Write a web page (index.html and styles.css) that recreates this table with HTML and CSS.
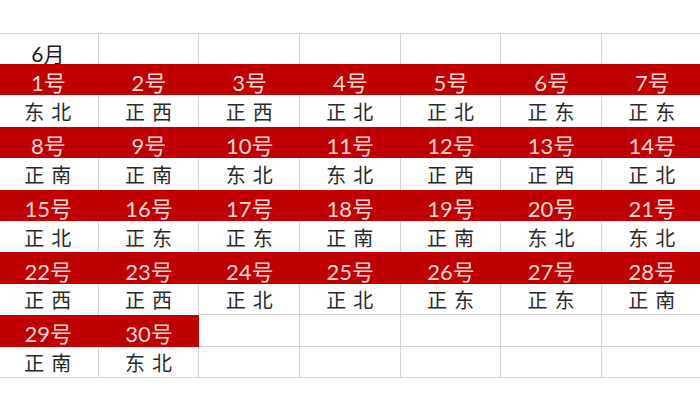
FILE: index.html
```html
<!DOCTYPE html>
<html lang="zh">
<head>
<meta charset="utf-8">
<link rel="stylesheet" href="styles.css">
</head>
<body>
<div class="sheet">
  <div class="c h">6月</div><div class="c"></div><div class="c"></div><div class="c"></div><div class="c"></div><div class="c"></div><div class="c"></div>

  <div class="r">1号</div><div class="r">2号</div><div class="r">3号</div><div class="r">4号</div><div class="r">5号</div><div class="r">6号</div><div class="r">7号</div>
  <div class="c w">东北</div><div class="c w">正西</div><div class="c w">正西</div><div class="c w">正北</div><div class="c w">正北</div><div class="c w">正东</div><div class="c w">正东</div>

  <div class="r">8号</div><div class="r">9号</div><div class="r">10号</div><div class="r">11号</div><div class="r">12号</div><div class="r">13号</div><div class="r">14号</div>
  <div class="c w">正南</div><div class="c w">正南</div><div class="c w">东北</div><div class="c w">东北</div><div class="c w">正西</div><div class="c w">正西</div><div class="c w">正北</div>

  <div class="r">15号</div><div class="r">16号</div><div class="r">17号</div><div class="r">18号</div><div class="r">19号</div><div class="r">20号</div><div class="r">21号</div>
  <div class="c w">正北</div><div class="c w">正东</div><div class="c w">正东</div><div class="c w">正南</div><div class="c w">正南</div><div class="c w">东北</div><div class="c w">东北</div>

  <div class="r">22号</div><div class="r">23号</div><div class="r">24号</div><div class="r">25号</div><div class="r">26号</div><div class="r">27号</div><div class="r">28号</div>
  <div class="c w">正西</div><div class="c w">正西</div><div class="c w bb">正北</div><div class="c w bb">正北</div><div class="c w bb">正东</div><div class="c w bb">正东</div><div class="c w bb">正南</div>

  <div class="r">29号</div><div class="r">30号</div><div class="c bb"></div><div class="c bb"></div><div class="c bb"></div><div class="c bb"></div><div class="c bb"></div>
  <div class="c w bb">正南</div><div class="c w bb">东北</div><div class="c bb"></div><div class="c bb"></div><div class="c bb"></div><div class="c bb"></div><div class="c bb"></div>
</div>
</body>
</html>
```

FILE: styles.css
```css
html, body {
  margin: 0;
  padding: 0;
  background: #ffffff;
  width: 700px;
  height: 400px;
  overflow: hidden;
}

.sheet {
  margin-top: 33px;
  margin-left: -2px;
  display: grid;
  grid-template-columns: repeat(7, 100.67px);
  grid-template-rows: 30px repeat(10, 31.4px);
  border-top: 1px solid #d4d4d4;
  width: 704.69px;
}

.c {
  box-sizing: border-box;
  border-right: 1px solid #d4d4d4;
  display: flex;
  align-items: center;
  justify-content: center;
}

.h {
  font-family: Lato, "Noto Sans CJK SC", sans-serif;
  font-size: 21px;
  color: #1a1a1a;
  line-height: 20px;
  align-items: flex-end;
}

.r {
  background: #c00000;
  color: #ffd9d9;
  font-family: Lato, "Noto Sans CJK SC", sans-serif;
  font-size: 22px;
  line-height: 22px;
  display: flex;
  align-items: center;
  justify-content: center;
  padding-top: 7px;
  box-sizing: border-box;
}

.w {
  font-family: "Noto Sans CJK SC", sans-serif;
  font-weight: 400;
  font-size: 20px;
  letter-spacing: 7px;
  padding-left: 7px;
  padding-top: 2px;
  color: #2a2a2a;
  line-height: 24px;
}

.bb {
  border-bottom: 1px solid #d4d4d4;
}
```
